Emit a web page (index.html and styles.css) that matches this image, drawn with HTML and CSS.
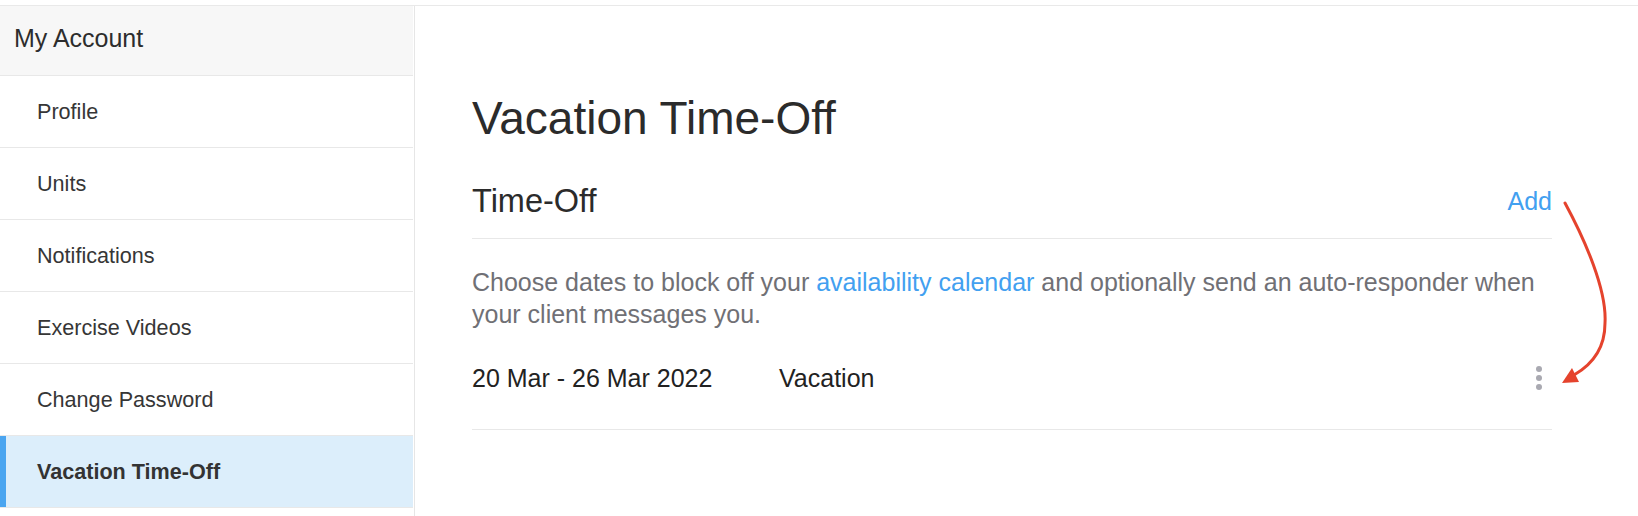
FILE: index.html
```html
<!DOCTYPE html>
<html lang="en">
<head>
    <meta charset="UTF-8">
    <meta name="viewport" content="width=device-width, initial-scale=1.0">
    <title>My Account - Vacation Time-Off</title>
    <link rel="stylesheet" href="styles.css">
</head>
<body>
    <div class="page">
        <aside class="sidebar">
            <div class="sidebar-title">My Account</div>
            <nav class="sidebar-nav">
                <a class="nav-item" href="#">Profile</a>
                <a class="nav-item" href="#">Units</a>
                <a class="nav-item" href="#">Notifications</a>
                <a class="nav-item" href="#">Exercise Videos</a>
                <a class="nav-item" href="#">Change Password</a>
                <a class="nav-item active" href="#">Vacation Time-Off</a>
            </nav>
        </aside>

        <main class="content">
            <h1 class="page-title">Vacation Time-Off</h1>

            <div class="section-head">
                <h2 class="section-title">Time-Off</h2>
                <a class="add-link" href="#">Add</a>
            </div>

            <p class="section-text">
                Choose dates to block off your <a href="#">availability calendar</a> and optionally send an auto-responder when your client messages you.
            </p>

            <div class="timeoff-row">
                <span class="timeoff-dates">20 Mar - 26 Mar 2022</span>
                <span class="timeoff-label">Vacation</span>
                <button class="kebab" type="button" aria-label="More">
                    <span></span><span></span><span></span>
                </button>
            </div>
        </main>

        <!-- annotation arrow: Add -> menu -->
        <svg class="annotation" width="60" height="200" viewBox="0 0 60 200">
            <path d="M10 8 C30 45, 52 95, 50 128 C50 150, 40 168, 19 180" fill="none" stroke="#e5432d" stroke-width="3" stroke-linecap="round"/>
            <polygon points="7,188 17,173 24,187" fill="#e5432d"/>
        </svg>
    </div>
</body>
</html>
```

FILE: styles.css
```css
* {
    box-sizing: border-box;
    margin: 0;
    padding: 0;
}

body {
    font-family: 'Liberation Sans', Arial, Helvetica, sans-serif;
    background: #fff;
    color: #2d2d2d;
    padding-top: 5px;
}

a {
    text-decoration: none;
}

.page {
    position: relative;
    display: flex;
    min-height: calc(100vh - 5px);
    border-top: 1px solid #e9e9e9;
}

/* sidebar */

.sidebar {
    width: 415px;
    flex-shrink: 0;
    padding-right: 1px;
    border-right: 1px solid #e6e6e6;
}

.sidebar-title {
    height: 70px;
    padding: 18px 14px 0;
    background: #f7f7f7;
    border-bottom: 1px solid #e8e8e8;
    font-size: 25px;
    line-height: 28px;
    color: #2d2d2d;
}

.sidebar-nav {
    display: flex;
    flex-direction: column;
}

.nav-item {
    display: flex;
    align-items: center;
    height: 72px;
    padding-left: 37px;
    border-bottom: 1px solid #e8e8e8;
    font-size: 21.6px;
    color: #363636;
}

.nav-item.active {
    background: #dceefb;
    box-shadow: inset 6px 0 0 #4aa5f0;
    font-weight: bold;
    color: #333;
}

/* main */

.content {
    flex: 1;
    padding: 86px 86px 0 57px;
}

.page-title {
    font-size: 46px;
    line-height: 52px;
    font-weight: normal;
    color: #2b2b2b;
}

.section-head {
    display: flex;
    justify-content: space-between;
    align-items: center;
    margin-top: 38px;
    padding-bottom: 18px;
    border-bottom: 1px solid #e8e8e8;
}

.section-title {
    font-size: 32.5px;
    line-height: 38px;
    font-weight: normal;
    color: #2b2b2b;
}

.add-link {
    font-size: 25px;
    line-height: 36px;
    color: #42a0f0;
}

.section-text {
    margin-top: 27px;
    font-size: 25px;
    line-height: 32px;
    color: #707075;
}

.section-text a {
    color: #42a0f0;
}

.timeoff-row {
    display: flex;
    align-items: center;
    padding: 32px 0 35px;
    border-bottom: 1px solid #e8e8e8;
    font-size: 25px;
    line-height: 32px;
    color: #222;
}

.timeoff-dates {
    width: 307px;
}

.timeoff-label {
    flex: 1;
}

.kebab {
    display: flex;
    flex-direction: column;
    gap: 3px;
    margin-right: 10px;
    background: none;
    border: none;
    cursor: pointer;
}

.kebab span {
    width: 6px;
    height: 6px;
    border-radius: 50%;
    background: #a9a9b1;
}

.annotation {
    position: absolute;
    left: 1555px;
    top: 189px;
}
```
